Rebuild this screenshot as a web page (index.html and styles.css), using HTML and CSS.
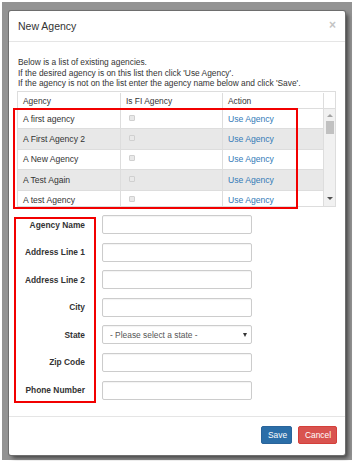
FILE: index.html
```html
<!DOCTYPE html>
<html lang="en">
  <head>
    <meta charset="UTF-8" />
    <meta name="viewport" content="width=device-width, initial-scale=1.0" />
    <title>New Agency</title>
    <link rel="stylesheet" href="styles.css">
  </head>
  <body>
    <div class="backdrop">
      <div class="modal">
        <div class="modal__header">
          <h4 class="modal__title">New Agency</h4>
          <span class="modal__close">&times;</span>
        </div>

        <div class="modal__body">
          <p class="intro">
            Below is a list of existing agencies.<br />
            If the desired agency is on this list then click 'Use Agency'.<br />
            If the agency is not on the list enter the agency name below and click 'Save'.
          </p>

          <div class="agency-list">
            <div class="agency-list__head">
              <div class="cell">Agency</div>
              <div class="cell">Is FI Agency</div>
              <div class="cell">Action</div>
              <div class="cell"></div>
            </div>
            <div class="agency-list__body">
              <div class="agency-list__rows">
                <div class="agency-row">
                  <div class="cell">A first agency</div>
                  <div class="cell"><span class="checkbox"></span></div>
                  <div class="cell"><a href="#" class="link">Use Agency</a></div>
                </div>
                <div class="agency-row agency-row--alt">
                  <div class="cell">A First Agency 2</div>
                  <div class="cell"><span class="checkbox"></span></div>
                  <div class="cell"><a href="#" class="link">Use Agency</a></div>
                </div>
                <div class="agency-row">
                  <div class="cell">A New Agency</div>
                  <div class="cell"><span class="checkbox"></span></div>
                  <div class="cell"><a href="#" class="link">Use Agency</a></div>
                </div>
                <div class="agency-row agency-row--alt">
                  <div class="cell">A Test Again</div>
                  <div class="cell"><span class="checkbox"></span></div>
                  <div class="cell"><a href="#" class="link">Use Agency</a></div>
                </div>
                <div class="agency-row">
                  <div class="cell">A test Agency</div>
                  <div class="cell"><span class="checkbox"></span></div>
                  <div class="cell"><a href="#" class="link">Use Agency</a></div>
                </div>
              </div>
              <div class="scrollbar">
                <span class="scrollbar__up"></span>
                <span class="scrollbar__thumb"></span>
                <span class="scrollbar__down"></span>
              </div>
            </div>
            <div class="highlight highlight--list"></div>
          </div>

          <form class="agency-form">
            <div class="form-row">
              <label class="form-row__label">Agency Name</label>
              <input class="form-row__input" type="text" />
            </div>
            <div class="form-row">
              <label class="form-row__label">Address Line 1</label>
              <input class="form-row__input" type="text" />
            </div>
            <div class="form-row">
              <label class="form-row__label">Address Line 2</label>
              <input class="form-row__input" type="text" />
            </div>
            <div class="form-row">
              <label class="form-row__label">City</label>
              <input class="form-row__input" type="text" />
            </div>
            <div class="form-row">
              <label class="form-row__label">State</label>
              <div class="select-wrap">
                <select class="form-row__input form-row__select">
                  <option>- Please select a state -</option>
                </select>
                <span class="select-wrap__arrow"></span>
              </div>
            </div>
            <div class="form-row">
              <label class="form-row__label">Zip Code</label>
              <input class="form-row__input" type="text" />
            </div>
            <div class="form-row">
              <label class="form-row__label">Phone Number</label>
              <input class="form-row__input" type="text" />
            </div>
            <div class="highlight highlight--labels"></div>
          </form>
        </div>

        <div class="modal__footer">
          <button class="btn btn--primary">Save</button>
          <button class="btn btn--danger">Cancel</button>
        </div>
      </div>
    </div>
  </body>
</html>
```

FILE: styles.css
```css
*,
*::before,
*::after {
  padding: 0;
  margin: 0;
  box-sizing: border-box;
  font-family: "Liberation Sans", Arial, sans-serif;
}

body {
  background-color: #fff;
  color: #333;
  font-size: 8.4px;
}

/* backdrop + modal */
.backdrop {
  margin: 2px 2px 1px 2px;
  height: 458px;
  padding: 9px 7px 5px 7px;
  background-color: #939393;
}

.modal {
  width: 336px;
  height: 444px;
  background-color: #fff;
  border-radius: 2px;
  box-shadow: 0 0 0 1px #6e6e6e, 3px 3px 4px rgba(0, 0, 0, 0.55);
  display: flex;
  flex-flow: column;
}

.modal__header {
  display: flex;
  justify-content: space-between;
  align-items: center;
  height: 31px;
  padding: 0 9px;
  border-bottom: 1px solid #e5e5e5;
}

.modal__title {
  font-size: 10.5px;
  font-weight: 400;
  line-height: 13px;
}

.modal__close {
  color: #c4c4c4;
  font-size: 12px;
  font-weight: 700;
  line-height: 12px;
  margin-top: -3px;
}

.modal__body {
  padding: 15px 9px 16px 8px;
}

.intro {
  line-height: 10.5px;
  padding-left: 1px;
  margin-bottom: 2.5px;
}

/* agency table */
.agency-list {
  position: relative;
  width: 319px;
  border: 1px solid #ddd;
  margin-bottom: 8px;
}

.agency-list__head {
  display: grid;
  grid-template-columns: 102px 102px 101px 1fr;
  height: 17px;
  border-bottom: 1px solid #ddd;
  align-items: center;
  padding-top: 1px;
}

.agency-list__head .cell,
.agency-row .cell {
  padding-left: 5px;
  height: 100%;
  display: flex;
  align-items: center;
}

.agency-list__head .cell + .cell,
.agency-row .cell + .cell {
  border-left: 1px solid #ddd;
}

.agency-row .cell {
  font-size: 8.6px;
}

.agency-list__body {
  display: flex;
  height: 97px;
  overflow: hidden;
}

.agency-list__rows {
  width: 305px;
}

.agency-row {
  display: grid;
  grid-template-columns: 102px 102px 101px;
  height: 20.4px;
  border-bottom: 1px solid #ddd;
  background-color: #fff;
}

.agency-row--alt {
  background-color: #e8e8e8;
}

.checkbox {
  width: 6px;
  height: 6px;
  margin-left: 3px;
  margin-top: -2px;
  border: 1px solid #d0d0d0;
  border-radius: 1px;
  background-color: #e9e9e9;
}

.link {
  color: #337ab7;
  text-decoration: none;
}

.scrollbar {
  flex: 1;
  border-left: 1px solid #ddd;
  background-color: #f1f1f1;
  display: flex;
  flex-flow: column;
  align-items: center;
  padding-top: 5px;
}

.scrollbar__up {
  width: 0;
  height: 0;
  border-left: 3px solid transparent;
  border-right: 3px solid transparent;
  border-bottom: 3px solid #a3a3a3;
}

.scrollbar__thumb {
  width: 8px;
  height: 13px;
  margin-top: 4px;
  background-color: #c1c1c1;
}

.scrollbar__down {
  width: 0;
  height: 0;
  margin-top: auto;
  margin-bottom: 6px;
  border-left: 3px solid transparent;
  border-right: 3px solid transparent;
  border-top: 3px solid #505050;
}

/* red highlight boxes */
.highlight {
  position: absolute;
  border: 2px solid #f20000;
  pointer-events: none;
}

.highlight--list {
  left: -5px;
  top: 16px;
  width: 285px;
  height: 101px;
}

.highlight--labels {
  left: -3px;
  top: 2px;
  width: 82px;
  height: 186px;
}

/* form */
.agency-form {
  position: relative;
  display: flex;
  flex-flow: column;
  gap: 8.6px;
}

.form-row {
  display: flex;
  align-items: center;
  gap: 17px;
}

.form-row__label {
  width: 68px;
  text-align: right;
  font-weight: 700;
  color: #333;
}

.form-row__input {
  width: 150px;
  height: 19px;
  border: 1px solid #ccc;
  border-radius: 2px;
  background-color: #fff;
  font-size: 8.4px;
  color: #555;
  box-shadow: inset 0 1px 1px rgba(0, 0, 0, 0.05);
}

.select-wrap {
  position: relative;
}

.form-row__select {
  appearance: none;
  -webkit-appearance: none;
  padding-left: 7px;
}

.select-wrap__arrow {
  position: absolute;
  right: 5px;
  top: 8px;
  width: 0;
  height: 0;
  border-left: 2.5px solid transparent;
  border-right: 2.5px solid transparent;
  border-top: 4px solid #333;
}

/* footer */
.modal__footer {
  border-top: 1px solid #e5e5e5;
  display: flex;
  justify-content: flex-end;
  gap: 6px;
  padding: 9px 8px 0 0;
}

.btn {
  height: 18px;
  border-radius: 2px;
  color: #fff;
  font-size: 8.4px;
  padding: 0 6px;
  border: 1px solid transparent;
}

.btn--primary {
  width: 31px;
  background-color: #2b6ea8;
  border-color: #2a649a;
}

.btn--danger {
  width: 39px;
  background-color: #d9534f;
  border-color: #d43f3a;
}
```
